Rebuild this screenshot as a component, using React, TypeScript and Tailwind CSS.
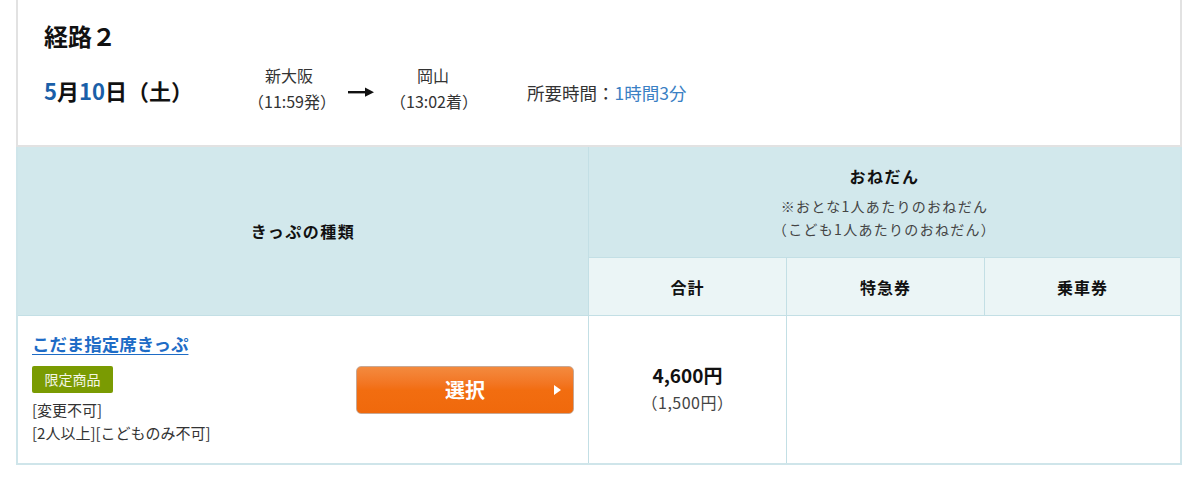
import React from 'react';

const font = { fontFamily: '"Noto Sans CJK JP", "Noto Sans", sans-serif' };

function Arrow() {
  return (
    <svg width="26" height="10" viewBox="0 0 26 10" className="block">
      <rect x="0" y="4" width="18" height="2.4" fill="#111" />
      <polygon points="17,0.5 26,5.2 17,9.8" fill="#111" />
    </svg>
  );
}

function RouteHeader() {
  return (
    <div className="border-x-2 border-b-2 border-[#e2e2e2] h-[147px] pl-[26px] pt-[18px] bg-white">
      <h2 className="text-[24px] font-bold leading-[36px] text-[#111]">経路２</h2>
      <div className="flex items-center mt-[8px]">
        <div className="w-[204px] text-[22px] font-bold text-[#111] leading-[30px] pt-[4px]">
          <span className="text-[#1a5fa8]">5</span>月<span className="text-[#1a5fa8]">10</span>日（土）
        </div>
        <div className="text-center text-[16px] leading-[26px] text-[#333] w-[82px]">
          <div>新大阪</div>
          <div>（11:59発）</div>
        </div>
        <div className="ml-[18px] mr-[16px] pt-[7px]">
          <Arrow />
        </div>
        <div className="text-center text-[16px] leading-[26px] text-[#333] w-[86px]">
          <div>岡山</div>
          <div>（13:02着）</div>
        </div>
        <div className="ml-[51px] text-[17.5px] text-[#333] pt-[10px]">
          所要時間：<span className="text-[#3a80c4]">1時間3分</span>
        </div>
      </div>
    </div>
  );
}

function FareTable() {
  return (
    <div className="grid grid-cols-[571px_198px_198px_1fr] grid-rows-[111px_57px_148px] border-2 border-t-0 border-[#cfe5ea]">
      <div className="row-span-2 bg-[#d2e8ec] border-r border-[#c3dfe5] flex items-center justify-center text-[16px] font-bold tracking-[1.5px] text-[#111]">
        きっぷの種類
      </div>
      <div className="col-span-3 bg-[#d2e8ec] border-b border-[#c3dfe5] flex flex-col items-center pt-[17px]">
        <div className="text-[16px] font-bold tracking-[1.5px] text-[#111] leading-[24px]">おねだん</div>
        <div className="text-[14px] tracking-[1.3px] text-[#444] leading-[23px] mt-[7px]">※おとな1人あたりのおねだん</div>
        <div className="text-[14px] tracking-[1.3px] text-[#444] leading-[23px]">（こども1人あたりのおねだん）</div>
      </div>
      <div className="bg-[#ebf5f6] border-r border-[#c3dfe5] flex items-center justify-center text-[16px] font-bold tracking-[1px] text-[#111]">合計</div>
      <div className="bg-[#ebf5f6] border-r border-[#c3dfe5] flex items-center justify-center text-[16px] font-bold tracking-[1px] text-[#111]">特急券</div>
      <div className="bg-[#ebf5f6] flex items-center justify-center text-[16px] font-bold tracking-[1px] text-[#111]">乗車券</div>

      <div className="border-t border-r border-[#c3dfe5] bg-white flex items-center pl-[14px] pr-[14px]">
        <div className="flex-1 self-start pt-[15px] flex flex-col items-start">
          <a href="#" className="text-[17.5px] font-bold text-[#1e6cc6] underline underline-offset-[3px] leading-[26px]">
            こだま指定席きっぷ
          </a>
          <div className="mt-[9px] flex items-center justify-center w-[81px] h-[27px] rounded-[2px] bg-[#7a9b02] text-[14px] text-[#f4f6e6]">
            限定商品
          </div>
          <div className="mt-[5px] text-[15px] text-[#333] leading-[23px]">[変更不可]</div>
          <div className="text-[15px] text-[#333] leading-[23px]">[2人以上][こどものみ不可]</div>
        </div>
        <button className="relative w-[218px] h-[48px] rounded-[5px] border border-[#c8a894] bg-gradient-to-b from-[#f38a3e] via-[#f26d10] to-[#f0690c] text-white text-[20px] font-bold flex items-center justify-center">
          選択
          <span className="absolute right-[12px] top-1/2 -translate-y-1/2 w-0 h-0 border-y-[5px] border-y-transparent border-l-[7px] border-l-white" />
        </button>
      </div>
      <div className="border-t border-r border-[#c3dfe5] bg-white flex flex-col items-center justify-center pb-[4px]">
        <div className="text-[19px] font-bold text-[#111] leading-[28px]">4,600円</div>
        <div className="text-[16px] tracking-[0.5px] text-[#444] leading-[26px]">（1,500円）</div>
      </div>
      <div className="col-span-2 border-t border-[#c3dfe5] bg-white" />
    </div>
  );
}

export default function App() {
  return (
    <div className="w-[1200px] h-[493px] bg-white pl-4 pr-[18px]" style={font}>
      <RouteHeader />
      <FareTable />
    </div>
  );
}
